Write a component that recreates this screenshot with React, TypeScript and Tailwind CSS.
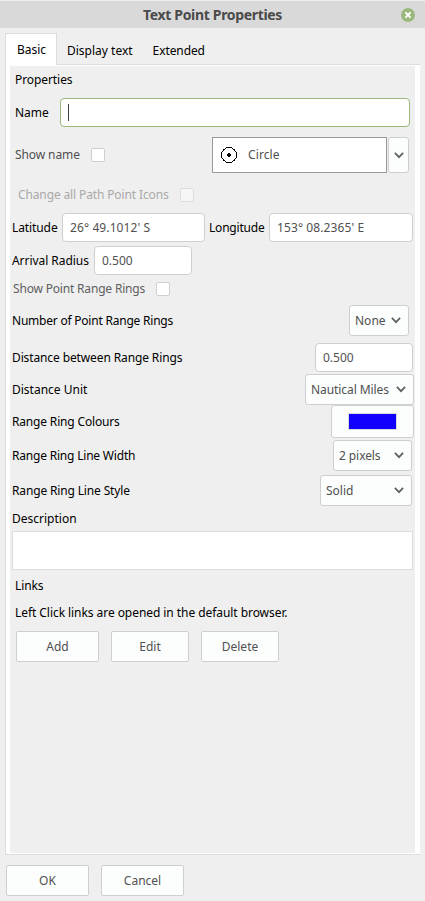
import React from "react";

const cx = (...c: (string | undefined)[]) => c.filter(Boolean).join(" ");

function Label({ children, className }: { children: React.ReactNode; className?: string }) {
  return <span className={cx("shrink-0 leading-4", className)}>{children}</span>;
}

function Field({ value, className }: { value: string; className?: string }) {
  return (
    <div className={cx("flex h-[29px] shrink-0 items-center rounded-[4px] border border-[#cfcfcf] bg-white pl-[7px] text-[#505050]", className)}>
      {value}
    </div>
  );
}

function Chevron({ className }: { className?: string }) {
  return (
    <svg width="10" height="7" viewBox="0 0 10 7" className={cx("shrink-0", className)} fill="none" stroke="#606060" strokeWidth="1.8">
      <path d="M0.9 0.9 5 5.1 9.1 0.9" />
    </svg>
  );
}

function Select({ value, className }: { value: string; className?: string }) {
  return (
    <div className={cx("flex h-[31px] shrink-0 items-center justify-between rounded-[3px] border border-[#cfcfcf] bg-[#fcfefd] pl-[5px] text-[#505050]", className)}>
      <span>{value}</span>
      <Chevron className="mb-px" />
    </div>
  );
}

function Check({ className }: { className?: string }) {
  return <div className={cx("h-[14px] w-[14px] shrink-0 rounded-[2px] border", className ?? "border-[#cfcfcf] bg-white")} />;
}

function Button({ children, className }: { children: string; className?: string }) {
  return (
    <button className={cx("flex h-[31px] shrink-0 items-center justify-center rounded-[2px] border border-[#cfcfcf] bg-[#fcfefd] text-[#505050]", className)}>
      {children}
    </button>
  );
}

export default function App() {
  return (
    <div className="flex h-[901px] w-[425px] flex-col overflow-hidden whitespace-nowrap bg-[#efefef] font-['Noto_Sans',sans-serif] text-[12px] text-black">
      <header className="flex h-[28px] shrink-0 items-center border-t border-[#efefef] bg-[#d9d9d9] pr-[10px]">
        <h1 className="ml-[143px] text-[14px] font-bold tracking-[-0.33px] text-[#4a4a4a]">Text Point Properties</h1>
        <svg width="14" height="14" viewBox="0 0 14 14" className="ml-auto">
          <circle cx="7" cy="7" r="7" fill="#9ab87c" />
          <path d="M4.4 4.4 9.6 9.6M9.6 4.4 4.4 9.6" stroke="#fff" strokeWidth="2" />
        </svg>
      </header>

      <nav className="flex h-[36px] shrink-0 items-end pl-[5px]">
        <div className="z-10 -mb-px flex h-[32px] w-[52px] items-center justify-center border border-b-0 border-[#dcdcdc] bg-white pl-px">Basic</div>
        <div className="ml-[10px] h-[21px] leading-4">Display text</div>
        <div className="ml-[20px] h-[21px] leading-4 tracking-[-0.1px]">Extended</div>
      </nav>

      <div className="ml-[5px] flex h-[791px] w-[415px] shrink-0 flex-col border-y border-l border-[#dcdcdc] bg-white pb-px pl-[4px] pr-[5px] pt-px">
        <main className="flex grow flex-col bg-[#efefef] pl-[2px]">
          <Label className="ml-[3px] mt-[6px] tracking-[-0.08px]">Properties</Label>

          <div className="mt-[10px] flex h-[29px] items-center">
            <Label className="ml-[3px] w-[45px]">Name</Label>
            <div className="flex h-[29px] w-[350px] items-center rounded-[4px] border border-[#9ab87c] bg-white pl-[7px]">
              <div className="h-[17px] w-px bg-[#404040]" />
            </div>
          </div>

          <div className="mt-[10px] flex h-[36px] items-center">
            <Label className="ml-[3px] w-[76px] tracking-[-0.1px] text-[#505050]">Show name</Label>
            <Check />
            <div className="ml-[107px] flex h-[36px] w-[175px] items-center border border-[#999] bg-white pl-[8px] text-[#505050]">
              <svg width="16" height="16" viewBox="0 0 16 16" fill="none" stroke="#000" shapeRendering="crispEdges">
                <circle cx="8" cy="8" r="7.5" />
                <path d="M7 6h2v1h1v2h-1v1h-2v-1h-1v-2h1z" fill="#000" stroke="none" />
              </svg>
              <span className="ml-[11px] tracking-[0.1px]">Circle</span>
            </div>
            <div className="ml-px flex h-[36px] w-[21px] items-center justify-center rounded-[3px] border border-[#cfcfcf] bg-[#fcfefd]">
              <Chevron />
            </div>
          </div>

          <div className="mt-[14px] flex h-[16px] items-center">
            <Label className="ml-[6px] w-[162px] tracking-[-0.13px] text-[#a9a9a9]">Change all Path Point Icons</Label>
            <Check className="border-[#dddddd] bg-[#f6f6f6]" />
          </div>

          <div className="mt-[10px] flex h-[29px] items-center">
            <Label className="w-[50px] tracking-[-0.1px]">Latitude</Label>
            <Field value="26° 49.1012' S" className="w-[143px] tracking-[0.1px]" />
            <Label className="ml-[4px] w-[60px] tracking-[-0.2px]">Longitude</Label>
            <Field value="153° 08.2365' E" className="w-[144px] tracking-[0.1px]" />
          </div>

          <div className="mt-[4px] flex h-[29px] items-center">
            <Label className="w-[82px] tracking-[-0.05px]">Arrival Radius</Label>
            <Field value="0.500" className="w-[98px]" />
          </div>

          <div className="mt-[6px] flex h-[16px] items-center">
            <Label className="ml-px w-[143px] tracking-[-0.18px] text-[#606060]">Show Point Range Rings</Label>
            <Check />
          </div>

          <div className="mt-[8px] flex h-[31px] items-center justify-between pr-[6px]">
            <Label className="tracking-[-0.22px]">Number of Point Range Rings</Label>
            <Select value="None" className="w-[60px] pr-[7px]" />
          </div>
          <div className="mt-[7px] flex h-[29px] items-center justify-between pr-[2px]">
            <Label className="tracking-[-0.12px]">Distance between Range Rings</Label>
            <Field value="0.500" className="w-[98px]" />
          </div>
          <div className="mt-[2px] flex h-[31px] items-center justify-between pr-px">
            <Label>Distance Unit</Label>
            <Select value="Nautical Miles" className="w-[109px] pr-[7px] tracking-[-0.08px]" />
          </div>
          <div className="flex h-[33px] items-center justify-between pr-px">
            <Label className="tracking-[-0.17px]">Range Ring Colours</Label>
            <div className="flex h-[33px] w-[83px] items-center justify-center rounded-[3px] border border-[#cfcfcf] bg-[#fcfefd]">
              <div className="h-[17px] w-[49px] border border-[#d9d9d9] bg-[#1200ff]" />
            </div>
          </div>
          <div className="mt-[2px] flex h-[31px] items-center justify-between pr-[3px]">
            <Label className="tracking-[-0.2px]">Range Ring Line Width</Label>
            <Select value="2 pixels" className="w-[79px] pr-[7px] tracking-[-0.08px]" />
          </div>
          <div className="mt-[4px] flex h-[31px] items-center justify-between pr-[3px]">
            <Label className="tracking-[-0.15px]">Range Ring Line Style</Label>
            <Select value="Solid" className="w-[92px] pr-[7px]" />
          </div>

          <Label className="mt-[5px]">Description</Label>
          <div className="mt-[4px] h-[39px] w-[401px] border border-[#dcdcdc] bg-white" />

          <Label className="ml-[3px] mt-[8px] tracking-[-0.1px]">Links</Label>
          <Label className="ml-[3px] mt-[11px] tracking-[-0.06px]">Left Click links are opened in the default browser.</Label>
          <div className="ml-[4px] mt-[10px] flex gap-[12px]">
            <Button className="w-[83px]">Add</Button>
            <Button className="w-[78px]">Edit</Button>
            <Button className="w-[78px]">Delete</Button>
          </div>
        </main>
      </div>

      <footer className="flex gap-[12px] pl-[6px] pt-[10px]">
        <Button className="w-[83px]">OK</Button>
        <Button className="w-[83px]">Cancel</Button>
      </footer>
    </div>
  );
}
